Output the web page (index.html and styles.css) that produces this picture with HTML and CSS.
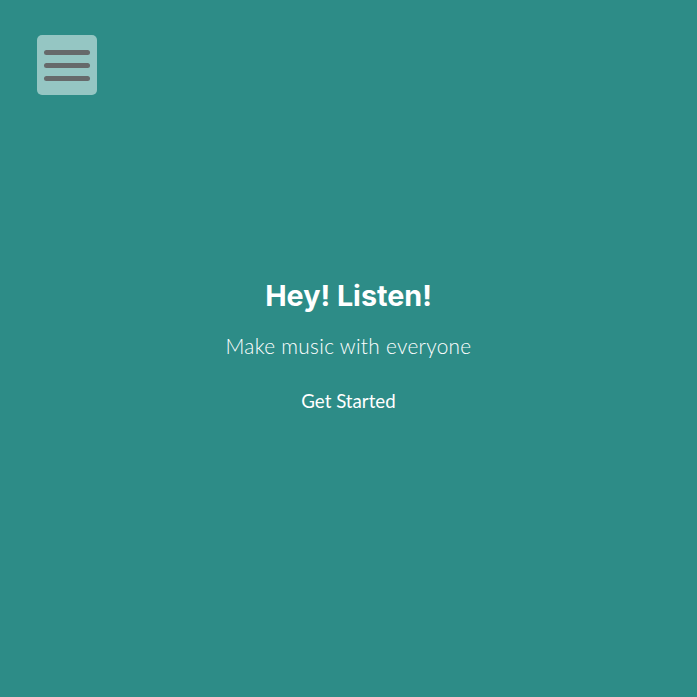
FILE: index.html
```html
<!DOCTYPE html>
<html>
<head>
<meta charset="utf-8">
<link rel="stylesheet" href="styles.css">
</head>
<body>
<header class="top">
  <button class="menu" aria-label="Menu">
    <span class="bar"></span><span class="bar"></span><span class="bar"></span>
  </button>
</header>
<main class="hero">
  <h1 class="title">Hey! Listen!</h1>
  <p class="subtitle">Make music with everyone</p>
  <a class="cta" href="#">Get Started</a>
</main>
</body>
</html>
```
FILE: styles.css
```css
html, body { margin: 0; padding: 0; }
body {
  background: #2d8c87;
  width: 697px;
  height: 697px;
  overflow: hidden;
  font-family: "Inter", "Roboto", sans-serif;
  color: #fff;
}
.top { padding: 35px 0 0 37px; height: 60px; }
.menu {
  width: 60px; height: 60px;
  border: 0; border-radius: 5px;
  background: #95c6c3;
  display: flex; flex-direction: column; justify-content: center; align-items: center;
  gap: 8px; padding: 0; margin: 0;
}
.bar { display: block; width: 46px; height: 5px; border-radius: 3px; background: #666a6b; }
.hero {
  display: flex; flex-direction: column; align-items: center;
  padding-top: 184px;
}
.title { margin: 0; font-size: 28.7px; font-weight: 700; line-height: 34px; }
.subtitle {
  margin: 21px 0 0; font-family: "Lato", sans-serif; font-weight: 300;
  font-size: 20.8px; line-height: 24px; letter-spacing: 0.3px;
}
.cta {
  margin-top: 32px; color: #fff; text-decoration: none;
  font-family: "Lato", sans-serif; font-weight: 400; font-size: 18.7px; line-height: 22px;
}
```
